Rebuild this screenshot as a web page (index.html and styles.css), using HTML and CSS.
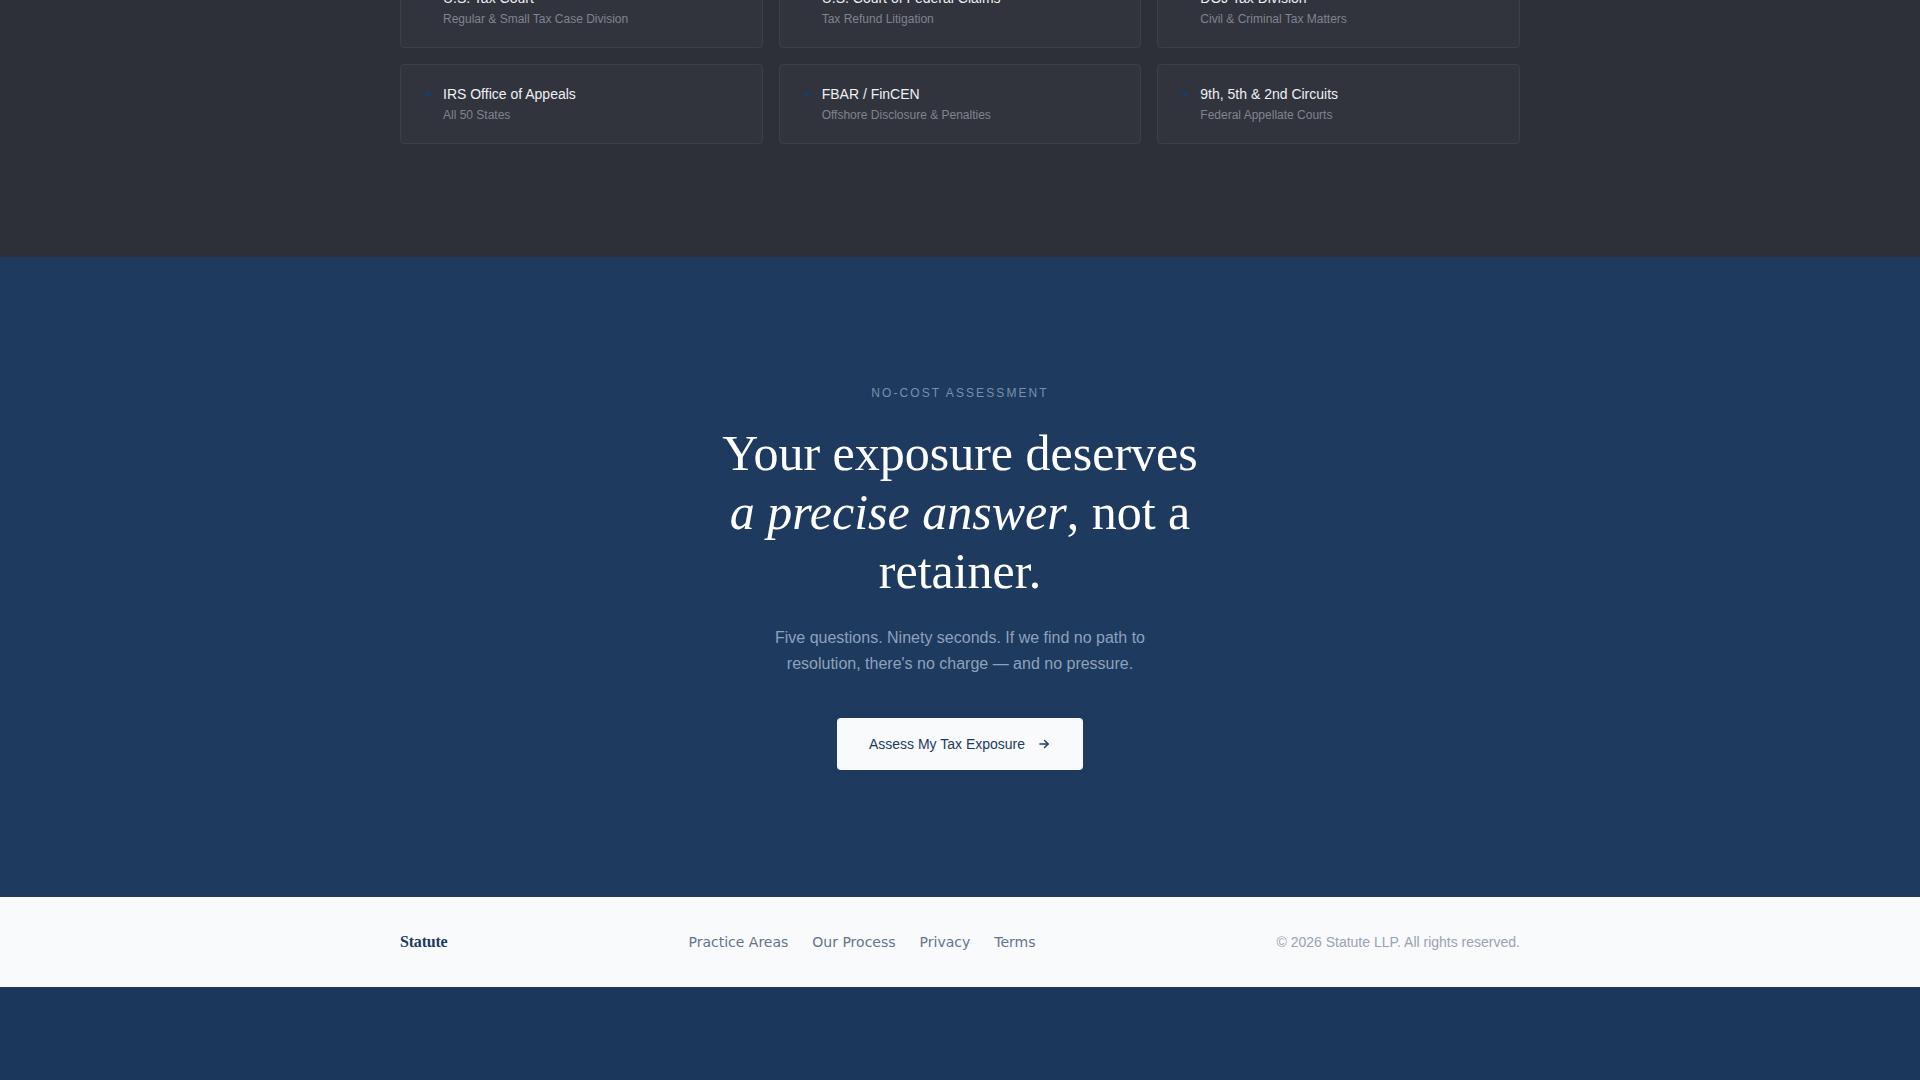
FILE: index.html
```html
<!DOCTYPE html>
<html lang="en">
<head>
  <meta charset="UTF-8" />
  <meta name="viewport" content="width=device-width, initial-scale=1" />
  <title>Statute — Tax Controversy Counsel</title>
  <link rel="stylesheet" href="styles.css">
</head>
<body>

  <!-- Foros donde litigamos -->
  <section class="venues">
    <div class="wrap">
      <div class="venue-grid">
        <div class="venue">
          <span class="dot"></span>
          <div>
            <div class="venue-name">U.S. Tax Court</div>
            <div class="venue-sub">Regular &amp; Small Tax Case Division</div>
          </div>
        </div>
        <div class="venue">
          <span class="dot"></span>
          <div>
            <div class="venue-name">U.S. Court of Federal Claims</div>
            <div class="venue-sub">Tax Refund Litigation</div>
          </div>
        </div>
        <div class="venue">
          <span class="dot"></span>
          <div>
            <div class="venue-name">DOJ Tax Division</div>
            <div class="venue-sub">Civil &amp; Criminal Tax Matters</div>
          </div>
        </div>
        <div class="venue">
          <span class="dot"></span>
          <div>
            <div class="venue-name">IRS Office of Appeals</div>
            <div class="venue-sub">All 50 States</div>
          </div>
        </div>
        <div class="venue">
          <span class="dot"></span>
          <div>
            <div class="venue-name">FBAR / FinCEN</div>
            <div class="venue-sub">Offshore Disclosure &amp; Penalties</div>
          </div>
        </div>
        <div class="venue">
          <span class="dot"></span>
          <div>
            <div class="venue-name">9th, 5th &amp; 2nd Circuits</div>
            <div class="venue-sub">Federal Appellate Courts</div>
          </div>
        </div>
      </div>
    </div>
  </section>

  <!-- Llamada a la acción -->
  <section class="cta">
    <div class="eyebrow">No-Cost Assessment</div>
    <h2>Your exposure deserves <em>a precise answer</em>, not a retainer.</h2>
    <p class="cta-text">Five questions. Ninety seconds. If we find no path to resolution, there's no charge — and no pressure.</p>
    <a class="btn-assess" href="#assess">
      Assess My Tax Exposure
      <svg width="14" height="14" viewBox="0 0 24 24" fill="none" stroke="currentColor" stroke-width="2.4" stroke-linecap="round" stroke-linejoin="round">
        <path d="M5 12h14"/>
        <path d="M13 6l6 6-6 6"/>
      </svg>
    </a>
  </section>

  <footer class="footer">
    <div class="wrap footer-row">
      <a class="brand" href="#">Statute</a>
      <nav class="footer-nav">
        <a href="#areas">Practice Areas</a>
        <a href="#process">Our Process</a>
        <a href="#privacy">Privacy</a>
        <a href="#terms">Terms</a>
      </nav>
      <div class="copy">© 2026 Statute LLP. All rights reserved.</div>
    </div>
  </footer>

</body>
</html>
```

FILE: styles.css
```css
body {
  margin: 0;
  font-family: 'Liberation Sans', Arial, sans-serif;
  background-color: #1b3759;
}

a {
  text-decoration: none;
}

.wrap {
  width: 1120px;
  margin: 0 auto;
}

/* Bloque oscuro con los foros */
.venues {
  background-color: #2d3039;
  padding-bottom: 113px;
}

.venue-grid {
  display: grid;
  grid-template-columns: repeat(3, 1fr);
  gap: 16px;
  margin-top: -32px;
}

.venue {
  display: flex;
  align-items: flex-start;
  gap: 12px;
  padding: 19px 24px 20px;
  background-color: #31343d;
  border: 1px solid #3c3f48;
  border-radius: 4px;
}

.dot {
  width: 6px;
  height: 6px;
  margin-top: 7px;
  border-radius: 50%;
  background-color: #1e3a5f;
  flex-shrink: 0;
}

.venue-name {
  font-size: 14px;
  line-height: 20px;
  color: #eef0f3;
}

.venue-sub {
  margin-top: 3px;
  font-size: 12px;
  line-height: 16px;
  color: #80848d;
}

/* Seccion azul */
.cta {
  background-color: #1e3a5f;
  padding: 128px 20px 127px;
  text-align: center;
}

.eyebrow {
  font-size: 12px;
  line-height: 16px;
  letter-spacing: 2.1px;
  text-transform: uppercase;
  color: #7890ad;
}

.cta h2 {
  max-width: 500px;
  margin: 23px auto 0;
  font-family: 'Liberation Serif', 'Times New Roman', serif;
  font-weight: normal;
  font-size: 50px;
  line-height: 59px;
  color: #fff;
}

.cta h2 em {
  font-style: italic;
}

.cta-text {
  max-width: 400px;
  margin: 24px auto 0;
  font-size: 16px;
  line-height: 26px;
  color: #8ea2bb;
}

.btn-assess {
  display: inline-flex;
  align-items: center;
  gap: 12px;
  margin-top: 41px;
  padding: 16px 32px;
  background-color: #f8fafc;
  color: #1e3a5f;
  font-size: 14px;
  line-height: 20px;
  border-radius: 4px;
}

/* Pie */
.footer {
  background-color: #f8fafc;
}

.footer-row {
  display: flex;
  justify-content: space-between;
  align-items: center;
  height: 90px;
}

.brand {
  font-family: 'Liberation Serif', 'Times New Roman', serif;
  font-weight: bold;
  font-size: 16px;
  letter-spacing: -0.2px;
  color: #1e3a5f;
}

.footer-nav {
  display: flex;
  gap: 24px;
}

.footer-nav a {
  font-family: 'DejaVu Sans', sans-serif;
  font-size: 14px;
  color: #64748b;
}

.copy {
  font-size: 14px;
  color: #9aa3b0;
}
```
